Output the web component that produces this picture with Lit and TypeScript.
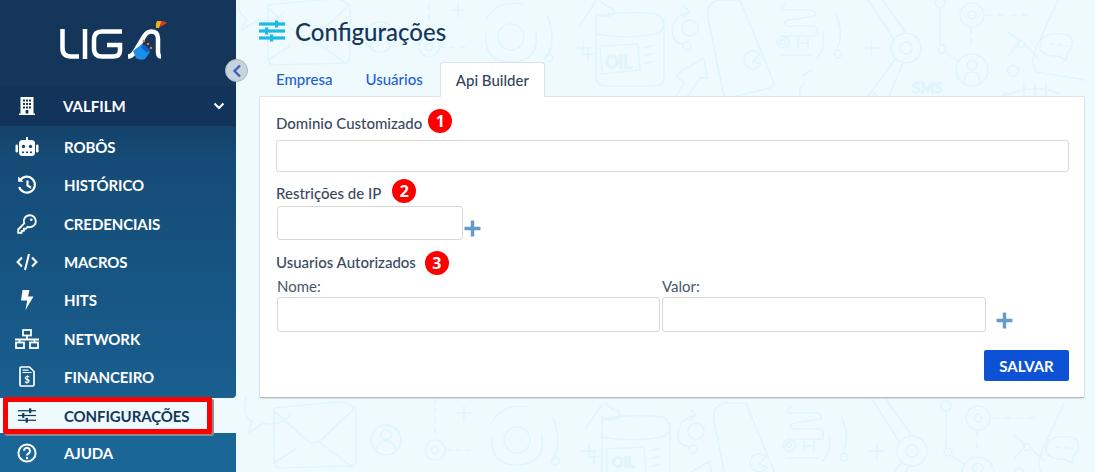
import { LitElement, html, css, svg } from "lit";
import { customElement } from "lit/decorators.js";

const sliders = (w: number, h: number, sw: number) => html`<svg width="${w}" height="${h}" viewBox="0 0 26 22" preserveAspectRatio="none" fill="currentColor">
  <rect x="0" y="${4 - sw / 2}" width="26" height="${sw}"/><rect x="16" y="0.5" width="3.2" height="7"/>
  <rect x="0" y="${11 - sw / 2}" width="26" height="${sw}"/><rect x="6" y="7.500" width="3.2" height="7"/>
  <rect x="0" y="${18 - sw / 2}" width="26" height="${sw}"/><rect x="11" y="14.500" width="3.2" height="7"/>
</svg>`;

const icons: Record<string, unknown> = {
  robo: html`<svg width="24" height="20" viewBox="0 0 24 20" fill="#fff"><rect x="11" y="0" width="2" height="3"/><rect x="4" y="3" width="16" height="16" rx="3.5"/><rect x="0.5" y="7.5" width="2.5" height="8" rx="1.2"/><rect x="21" y="7.5" width="2.5" height="8" rx="1.2"/><circle cx="8.5" cy="9.5" r="1.7" fill="#144a74"/><circle cx="15.5" cy="9.5" r="1.7" fill="#144a74"/><rect x="7" y="14.5" width="2" height="1.6" fill="#144a74"/><rect x="11" y="14.5" width="2" height="1.6" fill="#144a74"/><rect x="15" y="14.5" width="2" height="1.6" fill="#144a74"/></svg>`,
  hist: html`<svg width="20" height="20" viewBox="0 0 20 20" fill="none" stroke="#fff" stroke-width="2.2"><path d="M3.2 5.2A8 8 0 1 1 2.2 12"/><path d="M1.2 1.6 6.4 6.8H1.2z" fill="#fff" stroke="none"/><path d="M10.5 5.5v5l3.5 2.2"/></svg>`,
  key: html`<svg width="20" height="20" viewBox="0 0 20 20" fill="none" stroke="#fff" stroke-width="1.9" stroke-linejoin="round"><path d="M12.8 1.2a6 6 0 0 1 0 12c-.8 0-1.5-.1-2.2-.4l-1.7 1.9H6.8v2.2H4.6v2H1.2v-3.4l6-6.1a6 6 0 0 1 5.6-8.2z"/><circle cx="14.3" cy="5.7" r="1.3" fill="#fff" stroke="none"/></svg>`,
  code: html`<svg width="22" height="18" viewBox="0 0 22 18" fill="none" stroke="#fff" stroke-width="2.1"><path d="M6 4.5 1.6 9 6 13.5"/><path d="M16 4.5 20.4 9 16 13.5"/><path d="M13 1 9 17"/></svg>`,
  bolt: html`<svg width="13" height="20" viewBox="0 0 13 20" fill="#fff"><path d="M1.5 0h7L7 6.5h5.500L4.500 20 6.200 10.500H0z"/></svg>`,
  net: html`<svg width="24" height="20" viewBox="0 0 24 20" fill="none" stroke="#fff" stroke-width="1.8"><rect x="8" y="1" width="8" height="5.5"/><path d="M12 6.500v3.500M0 10.500h24M4.500 10.500v3M19.500 10.500v3"/><rect x="1" y="13.5" width="8" height="5.5"/><rect x="15" y="13.5" width="8" height="5.5"/></svg>`,
  fin: html`<svg width="16" height="21" viewBox="0 0 16 21" fill="none" stroke="#fff" stroke-width="1.7"><path d="M1 2.2q0-1.2 1.2-1.2H10.500L15 5.500v13.300q0 1.200-1.200 1.200H2.200Q1 20 1 18.800z"/><path d="M3.500 4.200h6M3.500 6.500h9" stroke-width="1.2"/><text x="8" y="17" font-family="Lato, sans-serif" font-size="9.5" font-weight="700" fill="#fff" stroke="none" text-anchor="middle">$</text></svg>`,
  help: html`<svg width="20" height="20" viewBox="0 0 20 20" fill="none" stroke="#fff" stroke-width="2"><circle cx="10" cy="10" r="8.6"/><path d="M7 7.800a3 3 0 1 1 4.600 2.500c-1.100.7-1.600 1.200-1.600 2.300"/><circle cx="10" cy="15" r="1.200" fill="#fff" stroke="none"/></svg>`,
  building: html`<svg width="16" height="18" viewBox="0 0 16 18"><path fill="#fff" d="M1.500 0h13v16.500h1.500V18H0v-1.500h1.500z"/><g fill="#14365a"><rect x="4" y="2.500" width="2" height="2"/><rect x="7" y="2.500" width="2" height="2"/><rect x="10" y="2.500" width="2" height="2"/><rect x="4" y="6" width="2" height="2"/><rect x="7" y="6" width="2" height="2"/><rect x="10" y="6" width="2" height="2"/><rect x="4" y="9.500" width="2" height="2"/><rect x="7" y="9.500" width="2" height="2"/><rect x="10" y="9.500" width="2" height="2"/><rect x="6.600" y="13" width="2.800" height="3.500"/></g></svg>`,
};

const menu: [string, string][] = [
  ["ROBÔS", "robo"], ["HISTÓRICO", "hist"], ["CREDENCIAIS", "key"], ["MACROS", "code"],
  ["HITS", "bolt"], ["NETWORK", "net"], ["FINANCEIRO", "fin"],
];

/* one sheet of the wallpaper, in page coordinates */
const sheet = (dx: number, dy: number) => svg`<g transform="translate(${dx} ${dy})">
  <path d="M268 5l62-6q20 0 20 12v46q0 6-8 6l-68 2q-6 0-6-8z"/><path d="M268 8l34 30q6 4 12 0l36-34M312 38l34 26M268 60l22-14"/>
  <path d="M240 -6q-4 20 6 24l-4 12 16-10q16 4 26-8"/>
  <circle cx="380" cy="37" r="15"/><circle cx="380" cy="32" r="5"/><path d="M370 47q2-9 10-9t10 9"/>
  <circle cx="429" cy="47" r="10"/><circle cx="429" cy="47" r="3.500"/><path d="M429 -5v40" stroke-dasharray="5 5"/><path d="M440 47h30" stroke-dasharray="5 5"/>
  <circle cx="511" cy="37" r="13"/><path d="M536 32q4 30-26 30-26 0-24-28M486 20q10-20 36-16"/><path d="M547 15q10 24 0 42"/><circle cx="549" cy="58" r="4"/>
  <path d="M451 10h14M458 3v14M582 54h12M588 48v12"/>
  <path d="M596 16q30-6 60-2 8 2 8 16v48q0 8-12 8h-44q-12 0-12-8V30q0-8 0-14z"/><path d="M596 34q30 6 60 0 8-2 8-14M596 14q6 4 14 2 6-2 2-8-8-2-12-8M580 25l16-24"/>
  <path d="M600 46l38-2 2 26-38 4z"/>
  <path d="M644 48l10-3M644 56l10-3M644 64l10-3"/><path d="M576 48h14M583 41v14"/>
  <circle cx="690" cy="28" r="8"/><circle cx="687" cy="46" r="4"/><path d="M690 12q-18 4-18 20 0 10 11 12M684 6l6 6-6 5"/>
  <path d="M680 72l24-14 3 20h-7l-12 18-14 4 10-18-8-6z"/>
  <path d="M708 8q6-10 18-8h14l32 78q4 8-2 10l-42 10q-4 0-6-10L708 18z"/><path d="M760 54a9 9 0 1 0 1 10l-8-3z"/>
  <path d="M785 4q-8 6 0 6h24q8 0 6 6l-26 4q-8 2-2 6h26q6 0 4 10h-26q-12 2-12 8"/><circle cx="783" cy="42" r="6"/><circle cx="783" cy="42" r="2.500"/><path d="M798 38v10M808 38v10M798 43h10M780 55h32"/>
  <path d="M823 32q3 16-6 26M836 15q8 18 2 32"/><circle cx="838" cy="54" r="4"/><path d="M805 82q-10 10-2 18M812 70l-10 6"/><path d="M864 48h14M871 41v14"/>
  <circle cx="906" cy="48" r="15"/><circle cx="906" cy="48" r="6"/><path d="M866 -4l28 44M880 -4l25 36M896 58l-32 44M903 62l-16 40"/>
  <circle cx="940" cy="3" r="5"/><path d="M940 8v36"/><circle cx="942" cy="49" r="4"/><path d="M946 53l12 8"/><circle cx="972" cy="70" r="16"/><circle cx="972" cy="65" r="5"/><path d="M964 84q0-12 8-12t8 12"/>
  <path d="M971 28v20" stroke-dasharray="6 5"/><circle cx="972" cy="15" r="12"/><circle cx="972" cy="15" r="4"/><path d="M986 15h42" stroke-dasharray="6 6"/>
  <path d="M1008 32l12 10M1020 42l-12 14"/><circle cx="1021" cy="44" r="3.500"/><circle cx="1013" cy="71" r="5.500"/><path d="M1026 46l12 12"/>
  <path d="M1058 0l-22 48q-6 14 0 24l50 8"/><path d="M1042 38q12-8 28-2 6 8-2 16l-2 8-8-4q-16 0-18-8z"/><path d="M1050 44h4M1058 45h4M1065 46h2"/>
  <path d="M1024 84v14M1035 84v14M1046 84v14M1000 98q30-16 60-4"/>
  <path d="M870 100l4-8 6 8M1000 100l6-8 6 8"/>
</g>`;

@customElement("app-root")
export class AppRoot extends LitElement {
  static styles = css`
    :host { display: block; width: 1095px; height: 472px; overflow: hidden; font-family: Lato, "Liberation Sans", sans-serif; color: #33445c; }
    .page { position: relative; display: grid; grid-template-columns: 236px 1fr; height: 472px; background: #eefafe; overflow: hidden; }
    .doodles { position: absolute; inset: 0; width: 100%; height: 100%; fill: none; stroke: #e0f5fb; stroke-width: 1.500; stroke-linecap: round; stroke-linejoin: round; }
    .doodles text { font-family: Lato, sans-serif; }
    .side { position: relative; display: flex; flex-direction: column; height: 472px; }
    .upper { background: linear-gradient(180deg, #14365a 0%, #14365a 20%, #154b76 40%, #195f90 100%); border-bottom-right-radius: 4px; height: 398px; }
    .logo { height: 86px; padding: 20px 0 0 60px; box-sizing: border-box; }
    .logo svg { display: block; }
    .org { height: 40px; display: flex; align-items: center; background: #13345a; color: #fff; font-weight: 700; font-size: 15px; }
    .org .nm { flex: 1; padding-left: 9px; }
    .org .chev { margin-right: 11px; }
    .items { padding-top: 2px; }
    .item { display: flex; align-items: center; height: 38.300px; color: #fff; font-weight: 700; font-size: 15px; letter-spacing: -0.1px; }
    .ic { width: 54px; display: flex; justify-content: center; flex: none; }
    .item span { margin-left: 10px; }
    .item.cfg { height: 35px; color: #14365a; }
    .item.help { background: #1a6697; height: 39px; }
    .mark { position: absolute; left: 3px; top: 397px; width: 209px; height: 37px; box-sizing: border-box; border: 5px solid #ff0000; border-radius: 2px; box-shadow: 2px 2px 0 #8a8a8a; }
    .toggle { position: absolute; left: 225px; top: 59px; width: 23px; height: 23px; border-radius: 50%; background: #c6d2dc; border: 1px solid #a9b7c3; box-sizing: border-box; display: flex; align-items: center; justify-content: center; }
    .main { position: relative; padding: 0 10px 0 24px; min-width: 0; }
    .title { height: 62px; display: flex; align-items: center; color: #14365a; font-size: 24px; font-weight: 500; gap: 10px; }
    .title svg { color: #1cb8e6; display: block; margin-left: -1px; }
    .tabs { display: flex; height: 34px; }
    .tab { padding: 0 16px; display: flex; align-items: center; font-size: 15px; font-weight: 500; color: #1f5fd0; }
    .tab.second { padding: 0 17px 0 17px; }
    .tab.on { background: #fff; color: #33445c; border: 1px solid #dde3e8; border-bottom: 0; border-radius: 3px 3px 0 0; position: relative; z-index: 1; height: 35px; box-sizing: border-box; padding: 0 15px; }
    .card { position: relative; background: #fff; border: 1px solid #dfe4e8; border-bottom: 1px solid #b5bcc2; border-radius: 0 0 3px 3px; height: 302px; box-sizing: border-box; padding: 14px 15px 0 16px; margin-left: -1px; box-shadow: 0 1px 1px rgba(0,0,0,.1); }
    .label { display: flex; align-items: center; font-size: 15px; font-weight: 500; color: #3a4a62; height: 24px; }
    .badge { width: 24px; height: 24px; border-radius: 50%; background: #ff0000; color: #fff; font-weight: 700; font-size: 16px; display: flex; align-items: center; justify-content: center; font-family: "Open Sans", sans-serif; }
    .b1 { margin-left: 6px; transform: translateY(-2px); }
    .b2 { margin-left: 11px; transform: translateY(-2px); }
    .b3 { margin-left: 9px; transform: translateY(1px); }
    input { display: block; box-sizing: border-box; background: #fff; border: 1px solid #d8d8d8; border-radius: 3px; outline: none; padding: 0; margin: 0; }
    .domain { width: 793px; height: 32px; margin-top: 5px; }
    .r2 { margin-top: 9px; }
    .iprow { display: flex; align-items: flex-end; margin-top: 1px; padding-left: 1px; }
    .ip { width: 186px; height: 34px; }
    .plus { color: #6699cc; display: block; }
    .iprow .plus { margin: 0 0 3px 1px; }
    .r3 { margin-top: 10px; }
    .cols { display: flex; gap: 2px; padding-left: 1px; margin-top: 3px; align-items: flex-end; }
    .col { display: flex; flex-direction: column; }
    .col label { font-size: 15px; color: #46566b; height: 20px; line-height: 18px; }
    .n { width: 383px; height: 35px; }
    .v { width: 324px; height: 35px; }
    .cols .plus { margin: 0 0 3px 8px; }
    .foot { display: flex; justify-content: flex-end; margin-top: 18px; }
    button { width: 85px; height: 31px; border: 0; border-radius: 2px; background: #0d52d6; color: #fff; font: 700 15px Lato, sans-serif; padding: 0; }
  `;

  private plus() {
    return html`<svg class="plus" width="17" height="17" viewBox="0 0 17 17" fill="currentColor"><rect x="0.500" y="6.800" width="16" height="3.400" rx=".6"/><rect x="6.800" y="0.500" width="3.400" height="16" rx=".6"/></svg>`;
  }

  render() {
    return html`<div class="page">
      <svg class="doodles" viewBox="0 0 1095 472" aria-hidden="true">
        ${sheet(0, 0)}${sheet(6, 403)}
        <text x="605" y="68" font-size="17">OIL</text>
        <text x="912" y="93" font-size="15">SMS</text>
        <text x="612" y="467" font-size="14">OIL</text>
      </svg>
      <aside class="side">
        <div class="upper">
          <div class="logo">
            <svg width="108" height="42" viewBox="0 0 108 42" fill="none" stroke="#fff" stroke-width="4.500">
              <path d="M2.500 9v19q0 8.500 8.500 8.500H19"/>
              <path d="M25 9v30"/>
              <path d="M62 11.500H42q-8 0-8 8V29q0 7.500 8 7.500h11q7 0 7-6V25H47"/>
              <path d="M68 36.500q4 0 7-5l9-15q3-5 7-5 7 0 7 7v13q0 5 3 5"/>
              <path d="M73 31l9-7 8 8-5 7q-5 2-9-1z" fill="#1c8fe8" stroke="none"/>
              <path d="M84 24l6 6-3 3-6-6z" fill="#0f5fc4" stroke="none"/>
              <circle cx="88" cy="24" r="1.300" fill="#e8762a" stroke="none"/><circle cx="91" cy="28" r="1.300" fill="#e8762a" stroke="none"/><circle cx="84" cy="21" r="1.300" fill="#e8762a" stroke="none"/>
              <path d="M97 1h5l-3 7-3 0q-1-4 1-7z" fill="#f2b21c" stroke="none"/><path d="M101 1q4 0 6 2l-7 4z" fill="#e5391e" stroke="none"/>
            </svg>
          </div>
          <div class="org">
            <div class="ic">${icons.building}</div>
            <div class="nm">VALFILM</div>
            <svg class="chev" width="12" height="8" viewBox="0 0 12 8" fill="none" stroke="#fff" stroke-width="2"><path d="M1.500 1.500 6 6l4.500-4.500"/></svg>
          </div>
          <div class="items">
            ${menu.map(([t, i]) => html`<div class="item"><div class="ic">${icons[i]}</div><span>${t}</span></div>`)}
          </div>
        </div>
        <div class="item cfg"><div class="ic">${sliders(18, 15, 1.8)}</div><span>CONFIGURAÇÕES</span></div>
        <div class="item help"><div class="ic">${icons.help}</div><span>AJUDA</span></div>
        <div class="mark"></div>
        <div class="toggle"><svg width="10" height="14" viewBox="0 0 10 14" fill="none" stroke="#3f62b8" stroke-width="2.400"><path d="M8 1.500 2.500 7 8 12.500"/></svg></div>
      </aside>
      <main class="main">
        <div class="title">${sliders(26, 22, 3.2)}<span>Configurações</span></div>
        <div class="tabs">
          <div class="tab">Empresa</div>
          <div class="tab second">Usuários</div>
          <div class="tab on">Api Builder</div>
        </div>
        <section class="card">
          <div class="label">Dominio Customizado<span class="badge b1">1</span></div>
          <input class="domain" />
          <div class="label r2">Restrições de IP<span class="badge b2">2</span></div>
          <div class="iprow"><input class="ip" />${this.plus()}</div>
          <div class="label r3">Usuarios Autorizados<span class="badge b3">3</span></div>
          <div class="cols">
            <div class="col"><label>Nome:</label><input class="n" /></div>
            <div class="col"><label>Valor:</label><input class="v" /></div>
            ${this.plus()}
          </div>
          <div class="foot"><button>SALVAR</button></div>
        </section>
      </main>
    </div>`;
  }
}
